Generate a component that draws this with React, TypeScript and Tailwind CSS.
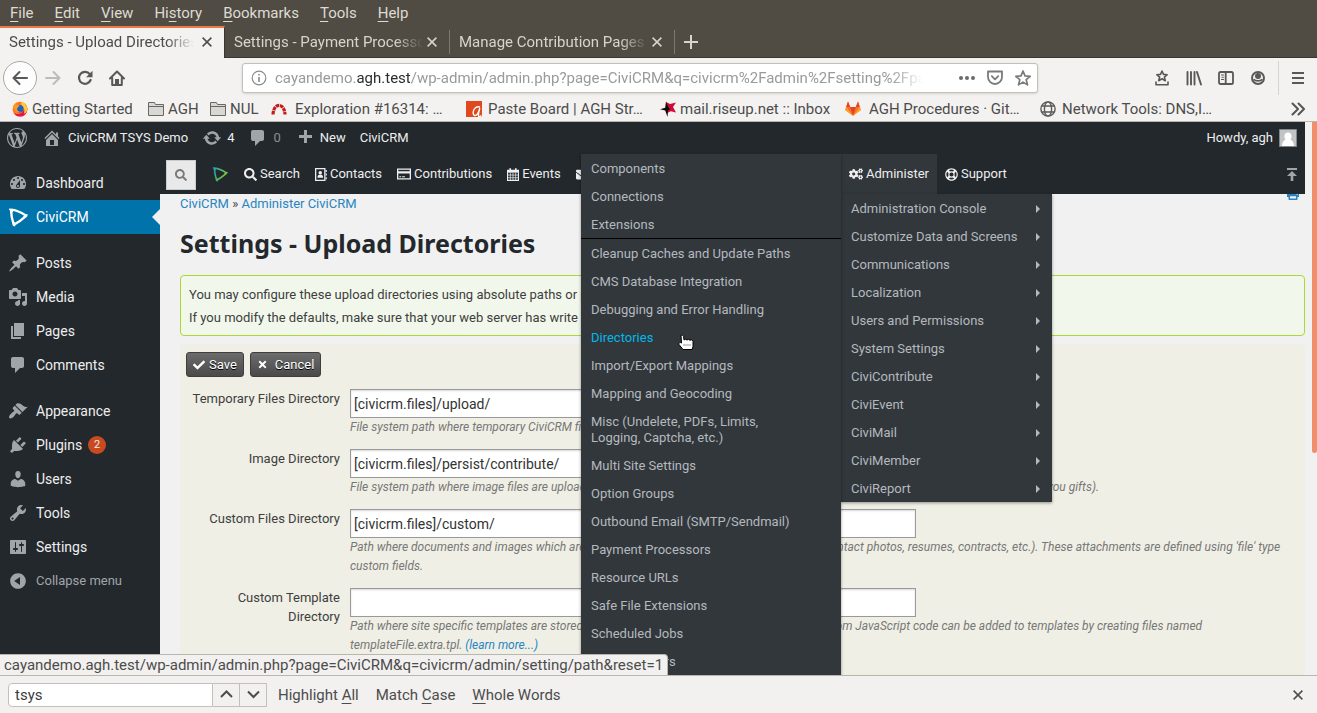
import React from 'react';
import { FaSearch, FaCheck, FaTimes, FaCogs, FaPrint, FaRegLifeRing, FaEnvelope, FaIdBadge, FaChartBar } from 'react-icons/fa';

/* ---------- shared icon helpers ---------- */

function Dash({ d, className = '' }: { d: string; className?: string }) {
  return (
    <svg viewBox="0 0 20 20" className={`size-5 shrink-0 ${className}`} fill="currentColor" aria-hidden="true">
      <path d={d} />
    </svg>
  );
}

const dash = {
  wordpress:
    'M20 10c0-5.51-4.49-10-10-10C4.48 0 0 4.49 0 10c0 5.52 4.48 10 10 10 5.51 0 10-4.48 10-10zM7.78 15.37L4.37 6.22c.55-.02 1.17-.08 1.17-.08.5-.06.44-1.13-.06-1.11 0 0-1.45.11-2.37.11-.18 0-.37 0-.58-.01C4.12 2.69 6.87 1.11 10 1.11c2.33 0 4.45.87 6.05 2.34-.68-.11-1.65.39-1.65 1.58 0 .74.45 1.36.9 2.1.35.61.55 1.36.55 2.46 0 1.49-1.4 5-1.4 5l-3.03-8.37c.54-.02.82-.17.82-.17.5-.05.44-1.25-.06-1.22 0 0-1.44.12-2.38.12-.87 0-2.33-.12-2.33-.12-.5-.03-.56 1.2-.06 1.22l.92.08 1.26 3.41zM17.41 10c.24-.64.74-1.87.43-4.25.7 1.29 1.05 2.71 1.05 4.25 0 3.29-1.73 6.24-4.4 7.78.97-2.59 1.94-5.2 2.92-7.78zM6.1 18.09C3.12 16.65 1.11 13.53 1.11 10c0-1.3.23-2.48.72-3.59C3.25 10.3 4.67 14.2 6.1 18.09zm4.03-6.63l2.58 6.98c-.86.29-1.76.45-2.71.45-.79 0-1.57-.11-2.29-.33.81-2.38 1.62-4.74 2.42-7.1z',
  home: 'M16 8.5l1.53 1.53-1.06 1.06L10 4.6l-6.47 6.49-1.06-1.06L10 2.5l4 4v-2h2v4zm-6-2.46l6 5.99V18H4v-5.97zM12 17v-5H8v5h4z',
  update:
    'M10.2 3.28c3.53 0 6.43 2.61 6.92 6h2.08l-3.5 4-3.5-4h2.32c-.45-1.97-2.21-3.45-4.32-3.45-1.45 0-2.73.71-3.54 1.78L4.95 5.66C6.23 4.2 8.11 3.28 10.2 3.28zm-.4 13.44c-3.52 0-6.43-2.61-6.92-6H.8l3.5-4c1.17 1.33 2.33 2.67 3.5 4H5.48c.45 1.97 2.21 3.45 4.32 3.45 1.45 0 2.73-.71 3.54-1.78l1.71 1.95c-1.28 1.46-3.15 2.38-5.25 2.38z',
  plus: 'M17 7v3h-5v5H9v-5H4V7h5V2h3v5h5z',
  dashboard:
    'M3.76 16h12.48c1.1-1.37 1.76-3.11 1.76-5 0-4.42-3.58-8-8-8s-8 3.58-8 8c0 1.89.66 3.63 1.76 5zM10 4c.55 0 1 .45 1 1s-.45 1-1 1-1-.45-1-1 .45-1 1-1zM6 6c.55 0 1 .45 1 1s-.45 1-1 1-1-.45-1-1 .45-1 1-1zm8 0c.55 0 1 .45 1 1s-.45 1-1 1-1-.45-1-1 .45-1 1-1zm-5.37 5.55L12 7v6c0 1.1-.9 2-2 2s-2-.9-2-2c0-.57.24-1.08.63-1.45zM4 10c.55 0 1 .45 1 1s-.45 1-1 1-1-.45-1-1 .45-1 1-1zm12 0c.55 0 1 .45 1 1s-.45 1-1 1-1-.45-1-1 .45-1 1-1zm-5 3c0-.55-.45-1-1-1s-1 .45-1 1 .45 1 1 1 1-.45 1-1z',
  post: 'M10.44 3.02l1.82-1.82 6.36 6.35-1.83 1.82c-1.05-.68-2.48-.57-3.41.36l-.75.75c-.92.93-1.04 2.35-.35 3.41l-1.83 1.82-2.41-2.41-2.8 2.79c-.42.42-3.38 2.71-3.8 2.29s1.86-3.39 2.28-3.81l2.79-2.79L4.1 9.36l1.83-1.82c1.05.69 2.48.57 3.4-.36l.75-.75c.93-.92 1.05-2.35.36-3.41z',
  media:
    'M13 11V4c0-.55-.45-1-1-1h-1.67L9 1H5L3.67 3H2c-.55 0-1 .45-1 1v7c0 .55.45 1 1 1h10c.55 0 1-.45 1-1zM7 4.5c1.38 0 2.5 1.12 2.5 2.5S8.38 9.5 7 9.5 4.5 8.38 4.5 7 5.62 4.5 7 4.5zM14 6h5v10.5c0 1.38-1.12 2.5-2.5 2.5S14 17.88 14 16.5s1.12-2.5 2.5-2.5c.17 0 .34.02.5.05V9h-3V6zm-4 8.05V13h2v3.5c0 1.38-1.12 2.5-2.5 2.5S7 17.88 7 16.5 8.12 14 9.5 14c.17 0 .34.02.5.05z',
  page: 'M6 15V2h10v13H6zm-1 1h8v2H3V5h2v11z',
  comments: 'M5 2h9c1.1 0 2 .9 2 2v7c0 1.1-.9 2-2 2h-2l-5 5v-5H5c-1.1 0-2-.9-2-2V4c0-1.1.9-2 2-2z',
  appearance:
    'M14.48 11.06L7.41 3.99l1.5-1.5c.5-.56 2.3-.47 3.51.32 1.21.8 1.43 1.28 2.91 2.1 1.18.64 2.45 1.26 4.45.85zm-.71.71L6.7 4.7 4.93 6.47c-.39.39-.39 1.02 0 1.41l1.06 1.06c.39.39.39 1.03 0 1.42-.6.6-1.43 1.11-2.21 1.69-.35.26-.7.53-1.01.84C1.43 14.23.4 16.08 1.4 17.07c.99 1 2.84-.03 4.18-1.36.31-.31.58-.66.85-1.02.57-.78 1.08-1.61 1.69-2.21.39-.39 1.02-.39 1.41 0l1.06 1.06c.39.39 1.02.39 1.41 0z',
  plugins:
    'M13.11 4.36L9.87 7.6 8 5.73l3.24-3.24c.35-.34 1.05-.2 1.56.32.52.51.66 1.21.31 1.55zm-8 1.77l.91-1.12 9.01 9.01-1.19.84c-.71.71-2.63 1.16-3.82 1.16H6.14L4.9 17.26c-.59.59-1.54.59-2.12 0-.59-.58-.59-1.53 0-2.12l1.24-1.24v-3.88c0-1.13.4-3.19 1.09-3.89zm7.26 3.97l3.24-3.24c.34-.35 1.04-.21 1.55.31.52.51.66 1.21.31 1.55l-3.24 3.25z',
  users:
    'M10 9.25c-2.27 0-2.73-3.44-2.73-3.44C7 4.02 7.82 2 9.97 2c2.16 0 2.98 2.02 2.71 3.81 0 0-.41 3.44-2.68 3.44zm0 2.57L12.72 10c2.39 0 4.52 2.33 4.52 4.53v2.49s-3.65 1.13-7.24 1.13c-3.65 0-7.24-1.13-7.24-1.13v-2.49c0-2.25 1.94-4.48 4.47-4.48z',
  tools:
    'M16.68 9.77c-1.34 1.34-3.3 1.67-4.95.99l-5.41 6.52c-.99.99-2.59.99-3.58 0s-.99-2.59 0-3.57l6.52-5.42c-.68-1.65-.35-3.61.99-4.95 1.28-1.28 3.12-1.62 4.72-1.06l-2.89 2.89 2.82 2.82 2.86-2.87c.53 1.58.18 3.39-1.08 4.65zM3.81 16.21c.4.39 1.04.39 1.43 0 .4-.4.4-1.04 0-1.43-.39-.4-1.03-.4-1.43 0-.39.39-.39 1.03 0 1.43z',
  settings:
    'M18 16V4c0-.55-.45-1-1-1H3c-.55 0-1 .45-1 1v12c0 .55.45 1 1 1h14c.55 0 1-.45 1-1zM8 11h1c.55 0 1 .45 1 1s-.45 1-1 1H8v1.5c0 .28-.22.5-.5.5s-.5-.22-.5-.5V13H6c-.55 0-1-.45-1-1s.45-1 1-1h1V5.5c0-.28.22-.5.5-.5s.5.22.5.5V11zm5-2h-1c-.55 0-1-.45-1-1s.45-1 1-1h1V5.5c0-.28.22-.5.5-.5s.5.22.5.5V7h1c.55 0 1 .45 1 1s-.45 1-1 1h-1v5.5c0 .28-.22.5-.5.5s-.5-.22-.5-.5V9z',
  collapse:
    'M10 2.16c4.33 0 7.84 3.51 7.84 7.84s-3.51 7.84-7.84 7.84S2.16 14.33 2.16 10 5.71 2.16 10 2.16zm2 11.72V6.12L6.18 9.97z',
};

function Civi({ className = '', gradient = false }: { className?: string; gradient?: boolean }) {
  return (
    <svg viewBox="0 0 20 20" className={className} fill="none" strokeLinejoin="round" strokeLinecap="round" aria-hidden="true">
      <defs>
        <linearGradient id="civi" x1="0" y1="0" x2="1" y2="0.4">
          <stop offset="0" stopColor="#2a9bc4" />
          <stop offset="0.4" stopColor="#3fb56a" />
          <stop offset="1" stopColor="#7fc242" />
        </linearGradient>
      </defs>
      <path
        d="M3 2.6C8 3 13 5.2 18.2 8.8 14.4 12.2 10.8 15 5.8 17.8 4.2 13 3 8 3 2.6z"
        stroke={gradient ? 'url(#civi)' : 'currentColor'}
        strokeWidth={gradient ? 2 : 2.4}
      />
      <path d="M1.6 2.2L4.4 4.6M19 7.8L16 9.6M6.6 18.8L6.4 15.8" stroke={gradient ? 'url(#civi)' : 'currentColor'} strokeWidth="1.4" />
    </svg>
  );
}

function Cross({ className = '' }: { className?: string }) {
  return (
    <svg viewBox="0 0 10 10" className={`size-[10px] ${className}`} stroke="currentColor" strokeWidth="1.5" aria-hidden="true">
      <path d="M.6.6l8.8 8.8M9.4.6L.6 9.4" />
    </svg>
  );
}

/* ---------- browser chrome ---------- */

const menus: [string, string, string][] = [
  ['', 'F', 'ile'],
  ['', 'E', 'dit'],
  ['', 'V', 'iew'],
  ['Hi', 's', 'tory'],
  ['', 'B', 'ookmarks'],
  ['', 'T', 'ools'],
  ['', 'H', 'elp'],
];

function MenuBar() {
  return (
    <nav className="flex h-[26px] items-center gap-[21px] bg-[#504c44] pl-[10px] text-[#dfdbd2]">
      {menus.map(([a, b, c]) => (
        <button key={a + b + c}>
          {a}
          <span className="underline underline-offset-[3px]">{b}</span>
          {c}
        </button>
      ))}
    </nav>
  );
}

const tabTitle =
  'flex-1 overflow-hidden text-left whitespace-nowrap [mask-image:linear-gradient(to_right,black_85%,transparent)]';

function Tabs() {
  return (
    <div className="flex h-8 border-b border-[#3b3431] bg-[#504c44] text-[#d8d4cb]">
      <div className="-mb-px flex w-[225px] items-center border-t-2 border-r border-t-[#ef7847] border-r-[#3b3431] bg-[#f4f2f0] pr-3 pb-0.5 pl-[9px] text-[#4c4c4c]">
        <button className={tabTitle}>Settings - Upload Directories</button>
        <button aria-label="Close tab" className="pl-2"><Cross /></button>
      </div>
      {['Settings - Payment Processors', 'Manage Contribution Pages'].map((t) => (
        <div key={t} className="flex w-[225px] items-center pl-[9px]">
          <button className={tabTitle}>{t}</button>
          <button aria-label="Close tab" className="pr-3 pl-1"><Cross /></button>
          <span className="h-6 w-px bg-[#7d7971]" />
        </div>
      ))}
      <button aria-label="New tab" className="px-[9px]">
        <svg viewBox="0 0 14 14" className="size-[14px]" stroke="currentColor" strokeWidth="2" aria-hidden="true"><path d="M7 0v14M0 7h14" /></svg>
      </button>
    </div>
  );
}

function NavBar() {
  return (
    <div className="flex h-10 items-center bg-[#f4f2f0] pr-3 pl-[3px] text-[#585858]">
      <button aria-label="Back" className="flex size-[34px] items-center justify-center rounded-full border border-[#aaa8a4] bg-[#fdfdfd]">
        <svg viewBox="0 0 16 16" className="size-4" fill="none" stroke="currentColor" strokeWidth="2" strokeLinecap="round" strokeLinejoin="round"><path d="M15 8H1.5M7.5 2l-6 6 6 6" /></svg>
      </button>
      <button aria-label="Forward" className="ml-2 text-[#bdbbb8]">
        <svg viewBox="0 0 16 16" className="size-4" fill="none" stroke="currentColor" strokeWidth="2" strokeLinecap="round" strokeLinejoin="round"><path d="M1 8h13.5M8.5 2l6 6-6 6" /></svg>
      </button>
      <button aria-label="Reload" className="ml-4">
        <svg viewBox="0 0 16 16" className="size-4" fill="none" stroke="currentColor" strokeWidth="2.2" strokeLinecap="round"><path d="M12.8 4.2A6 6 0 1 0 13.6 10" /><path d="M15.5 .8v6.4H9z" fill="currentColor" stroke="none" /></svg>
      </button>
      <button aria-label="Home" className="ml-4">
        <svg viewBox="0 0 16 16" className="size-4" fill="none" stroke="currentColor" strokeWidth="2" strokeLinecap="round" strokeLinejoin="round"><path d="M1 8.5L8 1.5l7 7M3.2 8v7h9.6V8" /><path d="M6 9h4v5H6z" fill="currentColor" stroke="none" /></svg>
      </button>
      <label className="ml-[117px] flex h-[30px] max-w-[796px] flex-1 items-center rounded-[3px] border border-[#c3c0bb] bg-white pr-1.5 pl-2 text-[#9a9a9a] shadow-sm">
        <svg viewBox="0 0 16 16" className="size-4 shrink-0" fill="none" stroke="#8a8a8a" strokeWidth="1.2"><circle cx="8" cy="8" r="6.8" /><path d="M8 7v5M8 4v1.6" strokeWidth="1.6" /></svg>
        <span className="ml-2 flex-1 overflow-hidden whitespace-nowrap [mask-image:linear-gradient(to_right,black_95%,transparent)]">
          cayandemo.<span className="text-[#2c2c2c]">agh.test</span>/wp-admin/admin.php?page=CiviCRM&amp;q=civicrm%2Fadmin%2Fsetting%2Fpath
        </span>
        <span className="ml-9 flex gap-0.5">
          {[0, 1, 2].map((i) => <i key={i} className="size-1 rounded-full bg-[#6b6b6b]" />)}
        </span>
        <svg viewBox="0 0 16 16" className="ml-3 size-4" fill="none" stroke="#7a7a7a" strokeWidth="1.8" strokeLinecap="round" strokeLinejoin="round"><path d="M1 1.5h14v5.5a7 7 0 0 1-14 0z" /><path d="M4.8 6.2L8 9.3l3.2-3.1" /></svg>
        <svg viewBox="0 0 16 16" className="ml-3 size-4" fill="none" stroke="#7a7a7a" strokeWidth="1.7" strokeLinejoin="round"><path d="M8 1l2 4.9 5.2.4-4 3.4 1.3 5.2L8 12.1l-4.5 2.8 1.3-5.2-4-3.4L6 5.9z" /></svg>
      </label>
      <div className="ml-auto flex items-center gap-4">
        <button aria-label="Bookmarks menu"><svg viewBox="0 0 16 16" className="size-4" fill="none" stroke="currentColor" strokeWidth="1.6" strokeLinejoin="round"><path d="M8 1l1.500 3.400 3.700.3-2.800 2.400.9 3.600L8 8.800l-3.300 1.900.9-3.600-2.800-2.400 3.700-.3z" /><path d="M2 12v2.8h12V12" strokeLinecap="round" /></svg></button>
        <button aria-label="Library"><svg viewBox="0 0 16 16" className="size-4" fill="none" stroke="currentColor" strokeWidth="1.9" strokeLinecap="round"><path d="M1.5 2v12.5M5 2v12.5M8.5 2v12.5M11 2l4 12.5" /></svg></button>
        <button aria-label="Sidebars"><svg viewBox="0 0 16 16" className="size-4" fill="none" stroke="currentColor" strokeWidth="1.8"><rect x="1" y="2" width="14" height="12" rx="1.6" /><path d="M7.7 2v12" /><path d="M3 5h3M3.5 7.3h2.3M3 9.5h3" strokeWidth="1" /></svg></button>
        <button aria-label="Account"><svg viewBox="0 0 16 16" className="size-4" fill="none" stroke="currentColor" strokeWidth="2"><circle cx="8" cy="8" r="6" /><circle cx="8" cy="6" r="3" fill="currentColor" stroke="none" /><path d="M3.600 9.300c1.800 2.200 7 2.200 8.800 0" strokeWidth="1.800" /></svg></button>
        <span className="-mx-1 h-[34px] w-px bg-[#d6d3cf]" />
        <button aria-label="Open menu"><svg viewBox="0 0 14 14" className="size-[14px]" stroke="currentColor" strokeWidth="2"><path d="M1 2h12M1 7h12M1 12h12" /></svg></button>
      </div>
    </div>
  );
}

function Folder() {
  return (
    <svg viewBox="0 0 16 14" className="h-[14px] w-4 shrink-0" fill="#d9d7d4" stroke="#6a6865" aria-hidden="true">
      <path d="M.5 13.5V.5h6l1 2h8v11zM.5 4.5h15" />
    </svg>
  );
}

const firefox = (
  <svg viewBox="0 0 16 16" className="size-4 shrink-0" aria-hidden="true">
    <circle cx="8" cy="8.2" r="7.4" fill="#ff7a1a" />
    <path d="M8 15.6a7.4 7.4 0 0 0 7.4-7.4C15.4 5.5 14 3.3 12.5 2c.6 2-.2 8-3 10S3 13 1.5 11.5A7.4 7.4 0 0 0 8 15.6z" fill="#e8144b" />
    <path d="M9.5.6c3.5 1.2 6 4.2 5.9 7.6-.4 2.8-1.8 4-3.4 4.6C13 9 12 6 9.8 4.5 9 3.5 9 2 9.5.6z" fill="#ffcb2e" />
    <circle cx="7.8" cy="7.8" r="3.7" fill="#1b63c9" />
    <path d="M1 6C1.5 4 2.5 2.6 3.5 2c0 1 .5 1.7 1.5 2 1.3 0 2 .4 2.5 1-1.2.8-2 1.5-2.5 3.2.3 1.9 2 2.8 4 2.3C6.5 12.3 3.5 11 2.5 8z" fill="#ff9a1f" />
  </svg>
);

const redmine = (
  <svg viewBox="0 0 16 12" className="h-3 w-4 shrink-0" fill="none" stroke="#c61a1a" strokeWidth="3.2" aria-hidden="true">
    <path d="M2 11.5C2.4 6 4.5 2.4 8 2.4s5.6 3.6 6 9.1" strokeDasharray="3.6 .7" />
  </svg>
);

const paste = (
  <svg viewBox="0 0 16 16" className="size-4 shrink-0" aria-hidden="true">
    <path d="M0 0h16v16H0z" fill="#e0481e" />
    <path d="M14 6c-3.500-1-6.300 1.500-6.800 5-.3 3 1.500 4.400 3.300 3 1.600-1.200 2.500-3.500 3.300-7-.8 3-2 7-1 8.500 .6.5 1.600.2 2.700-1" fill="none" stroke="#fff" strokeWidth="1.4" />
  </svg>
);

const riseup = (
  <svg viewBox="0 0 16 16" className="size-4 shrink-0" aria-hidden="true">
    <path d="M6 1l4 2 6-1.500L13 6l3 5.500-5-1.200L7 12z" fill="#cf0a3a" />
    <path d="M6 .5L8.200 6l1.800 2.200-2 1.200L7.500 16 5.200 9.500 0 8.300l5.200-1.500z" fill="#0b0b0b" />
  </svg>
);

const gitlab = (
  <svg viewBox="0 0 16 15" className="h-[15px] w-4 shrink-0" aria-hidden="true">
    <path d="M8 14.8L.2 9l1-3L3 .5 5.2 6h5.6L13 .5 14.8 6l1 3z" fill="#fc6d26" />
    <path d="M8 14.8L5.2 6h5.6z" fill="#e24329" />
    <path d="M8 14.8L.2 9l1-3zM8 14.8L15.8 9l-1-3z" fill="#fca326" />
    <path d="M3 .5L5.2 6h-4zM13 .5L14.8 6h-4z" fill="#e24329" />
  </svg>
);

const globe = (
  <svg viewBox="0 0 16 16" className="size-4 shrink-0" fill="none" stroke="#5a5a5a" strokeWidth="1.4" aria-hidden="true">
    <circle cx="8" cy="8" r="7.1" />
    <ellipse cx="8" cy="8" rx="3.6" ry="7.1" />
    <path d="M1.7 5h12.6M1.7 11h12.6" />
  </svg>
);

function Bookmarks() {
  const items: [React.ReactNode, string, string][] = [
    [firefox, 'Getting Started', 'w-[136px] gap-1'],
    [<Folder />, 'AGH', 'w-[62px] gap-1'],
    [<Folder />, 'NUL', 'w-[61px] gap-1'],
    [redmine, 'Exploration #16314: …', 'w-[195px] gap-2'],
    [paste, 'Paste Board | AGH Str…', 'w-[194px] gap-1.5'],
    [riseup, 'mail.riseup.net :: Inbox', 'w-[185px] gap-1'],
    [gitlab, 'AGH Procedures · Git…', 'w-[195px] gap-2'],
    [globe, 'Network Tools: DNS,I…', 'w-[185px] gap-1.5'],
  ];
  return (
    <div className="flex h-[24px] items-center border-b border-[#b9b6b2] bg-[#f4f2f0] pb-0.5 pl-3 text-[#4c4c4c]">
      {items.map(([icon, label, cls]) => (
        <a key={label} href="#" className={`flex shrink-0 items-center whitespace-nowrap ${cls}`}>
          {icon}
          {label}
        </a>
      ))}
      <button aria-label="More bookmarks" className="mr-3 ml-auto">
        <svg viewBox="0 0 14 14" className="size-[14px]" fill="none" stroke="#555" strokeWidth="2" strokeLinecap="round" strokeLinejoin="round"><path d="M1.5 1.5L7 7l-5.5 5.5M7.5 1.5L13 7l-5.500 5.500" /></svg>
      </button>
    </div>
  );
}

/* ---------- WordPress admin ---------- */

function AdminBar() {
  return (
    <div className="flex h-8 items-center bg-[#23282d] pr-2 pl-[7px] text-[13px] text-[#eee]">
      <a href="#" aria-label="About WordPress" className="text-[#a0a5aa]"><Dash d={dash.wordpress} /></a>
      <a href="#" className="ml-[15px] flex items-center gap-1.5"><Dash d={dash.home} className="text-[#a0a5aa]" />CiviCRM TSYS Demo</a>
      <a href="#" className="ml-3.5 flex items-center gap-[5px]"><Dash d={dash.update} className="text-[#a0a5aa]" />4</a>
      <a href="#" className="ml-3.5 flex items-center gap-[5px] text-[#8a8e92]"><Dash d={dash.comments} className="text-[#a0a5aa]" />0</a>
      <a href="#" className="ml-3.5 flex items-center gap-[5px]"><Dash d={dash.plus} className="text-[#a0a5aa]" />New</a>
      <a href="#" className="ml-3.5">CiviCRM</a>
      <a href="#" className="ml-auto flex items-center gap-1.5">
        Howdy, agh
        <svg viewBox="0 0 18 18" className="size-[18px]" aria-hidden="true">
          <path d="M.5.5h17v17H.5z" fill="#c3c3c3" stroke="#82878c" />
          <path d="M9 3.5c2.2 0 3.6 1.5 3.6 3.7 0 1.5-.6 2.6-1.4 3.3 2.3.8 3.6 3 3.8 6.5H3c.2-3.5 1.5-5.7 3.8-6.5C6 9.8 5.4 8.7 5.4 7.2 5.4 5 6.8 3.5 9 3.5z" fill="#fff" />
        </svg>
      </a>
    </div>
  );
}

const sideItems: { label: string; icon: string; gap?: boolean; badge?: string; current?: boolean }[] = [
  { label: 'Dashboard', icon: dash.dashboard },
  { label: 'CiviCRM', icon: '', current: true },
  { label: 'Posts', icon: dash.post, gap: true },
  { label: 'Media', icon: dash.media },
  { label: 'Pages', icon: dash.page },
  { label: 'Comments', icon: dash.comments },
  { label: 'Appearance', icon: dash.appearance, gap: true },
  { label: 'Plugins', icon: dash.plugins, badge: '2' },
  { label: 'Users', icon: dash.users },
  { label: 'Tools', icon: dash.tools },
  { label: 'Settings', icon: dash.settings },
];

function Sidebar() {
  return (
    <nav className="w-40 shrink-0 bg-[#23282d] pt-3 text-[14px] text-[#eee]">
      {sideItems.map((it) => (
        <a
          key={it.label}
          href="#"
          className={`relative flex h-[34px] items-center gap-2 pl-2 ${it.gap ? 'mt-3' : ''} ${it.current ? 'bg-[#0073aa] text-white' : ''}`}
        >
          {it.current ? <Civi className="size-5" /> : <Dash d={it.icon} className="text-[#a0a5aa]" />}
          {it.label}
          {it.badge && <span className="-ml-0.5 flex size-[18px] items-center justify-center rounded-full bg-[#ca4a1f] text-[11px]">{it.badge}</span>}
          {it.current && <span className="absolute top-1/2 right-0 -translate-y-1/2 border-8 border-transparent border-r-[#f1f1f1]" />}
        </a>
      ))}
      <button className="flex h-[34px] items-center gap-2 pl-2 text-[13px] text-[#a0a5aa]"><Dash d={dash.collapse} />Collapse menu</button>
    </nav>
  );
}

/* ---------- CiviCRM menu ---------- */

const contactsIcon = (
  <svg viewBox="0 0 13 14" className="h-[13px] w-3" aria-hidden="true">
    <path d="M.7.7h10v12.6H.7z" fill="none" stroke="currentColor" strokeWidth="1.4" />
    <circle cx="5.7" cy="5" r="1.9" fill="currentColor" />
    <path d="M2.6 10.5c0-2.5 1.2-3.6 3.1-3.6s3.1 1.1 3.1 3.6z" fill="currentColor" />
    <path d="M11.5 2h1.3v2.2h-1.3zM11.5 6h1.3v2.2h-1.3zM11.5 10h1.3v2.2h-1.3z" fill="currentColor" />
  </svg>
);

const cardIcon = (
  <svg viewBox="0 0 15 12" className="h-3 w-[14px]" aria-hidden="true">
    <path d="M.7.7h13.6v10.6H.7z" fill="none" stroke="currentColor" strokeWidth="1.4" />
    <path d="M.7 3h13.6v2.5H.7zM2.5 8.5h2v1h-2zM5.5 8.5h3v1h-3z" fill="currentColor" />
  </svg>
);

const calendarIcon = (
  <svg viewBox="0 0 13 14" className="h-[13px] w-3" fill="none" stroke="currentColor" aria-hidden="true">
    <path d="M.6 2.5h11.8v10.9H.6z" strokeWidth="1.2" />
    <path d="M.6 4h11.8" strokeWidth="2" />
    <path d="M.6 7.6h11.8M.6 10.5h11.8M3.6 5v8.4M6.5 5v8.4M9.4 5v8.4" strokeWidth=".8" />
    <path d="M3.5.3v3M9.5.3v3" strokeWidth="1.8" />
  </svg>
);

const civiItems: [React.ReactNode, string][] = [
  [<FaSearch className="size-[13px]" />, 'Search'],
  [contactsIcon, 'Contacts'],
  [cardIcon, 'Contributions'],
  [calendarIcon, 'Events'],
  [<FaEnvelope className="size-[13px]" />, 'Mailings'],
  [<FaIdBadge className="size-[13px]" />, 'Members'],
  [<FaChartBar className="size-[13px]" />, 'Reports'],
];

const adminItems = [
  'Administration Console', 'Customize Data and Screens', 'Communications', 'Localization', 'Users and Permissions',
  'System Settings', 'CiviContribute', 'CiviEvent', 'CiviMail', 'CiviMember', 'CiviReport',
];

const systemItems = [
  'Components', 'Connections', 'Extensions', 'Cleanup Caches and Update Paths', 'CMS Database Integration',
  'Debugging and Error Handling', 'Directories', 'Import/Export Mappings', 'Mapping and Geocoding',
  'Misc (Undelete, PDFs, Limits, Logging, Captcha, etc.)', 'Multi Site Settings', 'Option Groups',
  'Outbound Email (SMTP/Sendmail)', 'Payment Processors', 'Resource URLs', 'Safe File Extensions', 'Scheduled Jobs', 'SMS Providers',
];

function CiviMenu() {
  return (
    <div className="relative z-10 flex h-10 items-center bg-[#23282d] pl-1.5 text-[13px] text-[#eee]">
      <button aria-label="Quick search" className="mt-0.5 flex size-[30px] shrink-0 items-center justify-center border border-[#ccc] bg-[#e9e9e9] text-[#7a7a7a]">
        <FaSearch className="size-3" />
      </button>
      <div className="flex w-[645px] shrink-0 items-center overflow-hidden">
        <a href="#" aria-label="CiviCRM home" className="px-4"><Civi gradient className="size-4" /></a>
        {civiItems.map(([icon, label]) => (
          <a key={label} href="#" className="flex shrink-0 items-center gap-[3px] pr-[15px]">
            {icon}
            {label}
          </a>
        ))}
      </div>
      <div className="relative flex h-10 items-center bg-[#32373c]">
        <a href="#" className="flex items-center gap-[3px] px-2"><FaCogs className="size-[14px]" />Administer</a>
        <ul className="absolute top-full left-0 w-[211px] bg-[#32373c] text-[#b4b9be] shadow-[0_1px_3px_rgba(0,0,0,0.4)]">
          {adminItems.map((t) => (
            <li key={t}>
              <a href="#" className="flex items-center justify-between pt-[7px] pr-3 pb-[5px] pl-2.5 leading-4">
                {t}
                <svg viewBox="0 0 4 8" className="h-2 w-1" fill="currentColor" aria-hidden="true"><path d="M0 0l4 4-4 4z" /></svg>
              </a>
            </li>
          ))}
        </ul>
        <ul className="absolute top-0 right-full w-[260px] bg-[#32373c] pb-7 text-[#b4b9be] shadow-[0_1px_3px_rgba(0,0,0,0.4)]">
          {systemItems.map((t) => (
            <li key={t} className={t === 'Extensions' ? 'border-b border-black' : ''}>
              <a href="#" className={`block pt-[7px] pr-[70px] pb-[5px] pl-2.5 leading-4 ${t.length < 40 ? 'whitespace-nowrap' : ''} ${t === 'Directories' ? 'text-[#00b9eb]' : ''}`}>{t}</a>
            </li>
          ))}
        </ul>
        <svg viewBox="0 0 16 17" className="absolute top-[180px] -left-[163px] h-[17px] w-4" aria-hidden="true">
          <path d="M3 1.5c1.6-1 2.6 0 2.6 1l.4 3.5 1.5-.8 1.5.8 1.5-.6 1.5.8 1.7-.4 1.3 1.4v5.3l-1 3H5L1 10.5C.4 9 2 8 3.5 9z" fill="#fff" stroke="#000" />
          <path d="M6 10v2M8 10v2M10 10v2M12 10v2" stroke="#999" />
        </svg>
      </div>
      <a href="#" className="ml-2 flex items-center gap-[3px]"><FaRegLifeRing className="size-[13px]" />Support</a>
      <button aria-label="Adjust menu position" className="mr-2 ml-auto text-[#a0a5aa]">
        <svg viewBox="0 0 10 13" className="h-[13px] w-[10px]" aria-hidden="true"><path d="M0 0h10v2H0zM5 3l5 5H6.3v5H3.7V8H0z" fill="currentColor" /></svg>
      </button>
    </div>
  );
}

/* ---------- settings form ---------- */

const fields: { id: string; label: string; value: string; help: React.ReactNode }[] = [
  { id: 'uploadDir', label: 'Temporary Files Directory', value: '[civicrm.files]/upload/', help: 'File system path where temporary CiviCRM files - such as import data files - are uploaded.' },
  { id: 'imageUploadDir', label: 'Image Directory', value: '[civicrm.files]/persist/contribute/', help: 'File system path where image files are uploaded. Currently this path is used in images associated with premiums (CiviContribute thank-you gifts).' },
  { id: 'customFileUploadDir', label: 'Custom Files Directory', value: '[civicrm.files]/custom/', help: "Path where documents and images which are attachments to contact records are kept (e.g. contact photos, resumes, contracts, etc.). These attachments are defined using 'file' type custom fields." },
  {
    id: 'customTemplateDir', label: 'Custom Template Directory', value: '',
    help: <>Path where site specific templates are stored if any. This folder is searched first if it's set. Custom JavaScript code can be added to templates by creating files named templateFile.extra.tpl. <a href="#" className="text-[#2786c2]">(learn more...)</a></>,
  },
];

const buttonStyle =
  'flex h-[25px] items-center rounded-[3px] border border-[#3e3e3e] bg-linear-to-b from-[#6c6c6c] to-[#4a4a4a] text-white [text-shadow:0_1px_0_black]';

function Content() {
  return (
    <main className="bg-[#f1f1f1] pl-5 text-[13px] text-[#3e3e3e]">
      <div className="flex h-[19px] items-center justify-between">
        <p><a href="#" className="text-[#2786c2]">CiviCRM</a> » <a href="#" className="text-[#2786c2]">Administer CiviCRM</a></p>
        <a href="#" aria-label="Print" className="-mt-1.5 mr-1.5 self-start text-[#2786c2]"><FaPrint className="size-3" /></a>
      </div>
      <h1 className="mt-3 font-['Noto_Sans'] text-[25px] leading-9 font-bold text-[#23282d]">Settings - Upload Directories</h1>
      <div className="mt-3.5 rounded border border-[#acd836] bg-[#f1f8eb] px-2 pt-[7px] pb-1.5 leading-[23px]">
        <p>You may configure these upload directories using absolute paths or path variables.</p>
        <p>If you modify the defaults, make sure that your web server has write access to the directories.</p>
      </div>
      <form className="mt-2 rounded bg-[#efefe5] px-1.5 pt-2 pb-10" onSubmit={(e) => e.preventDefault()}>
        <div className="flex gap-1.5">
          <button className={`${buttonStyle} gap-1 px-1.5`}><FaCheck className="size-3" />Save</button>
          <button className={`${buttonStyle} gap-[7px] px-1.5`}><FaTimes className="size-[11px]" />Cancel</button>
        </div>
        <div className="mt-3 flex flex-col gap-3">
          {fields.map((f) => (
            <div key={f.id} className="flex gap-2.5">
              <label htmlFor={f.id} className="w-[154px] shrink-0 text-right leading-[19px]">{f.label}</label>
              <div className="min-w-0 flex-1">
                <input
                  id={f.id}
                  defaultValue={f.value}
                  className="block h-[29px] w-[566px] border border-[#999] bg-white px-[3px] text-[14px] text-[#333] shadow-[inset_0_1px_2px_rgba(0,0,0,0.15)]"
                />
                <p className="text-[12px] leading-[19px] text-[#777] italic">{f.help}</p>
              </div>
            </div>
          ))}
        </div>
      </form>
    </main>
  );
}

function FindBar() {
  return (
    <div className="flex h-[38px] items-center border-t border-[#b9b6b2] bg-[#f2f1ef] pr-3.5 pl-2 text-[#4c4c4c]">
      <input aria-label="Find in page" defaultValue="tsys" className="h-6 w-[205px] rounded-l-sm border border-[#c3c0bb] bg-white px-1.5 text-[#3c3c3c]" />
      {['M1 7l5.5-5.5L12 7', 'M1 1.5L6.5 7 12 1.5'].map((d, i) => (
        <button key={d} aria-label={i ? 'Next' : 'Previous'} className="flex h-6 w-[27px] items-center justify-center border border-l-0 border-[#c3c0bb]">
          <svg viewBox="0 0 13 9" className="h-[9px] w-[13px]" fill="none" stroke="currentColor" strokeWidth="2"><path d={d} /></svg>
        </button>
      ))}
      <button className="ml-[11px]">Highlight <u className="underline-offset-[3px]">A</u>ll</button>
      <button className="ml-[17px]">Match <u className="underline-offset-[3px]">C</u>ase</button>
      <button className="ml-[17px]"><u className="underline-offset-[3px]">W</u>hole Words</button>
      <button aria-label="Close find bar" className="ml-auto"><Cross /></button>
    </div>
  );
}

export default function App() {
  return (
    <div className="flex h-screen flex-col overflow-hidden font-['Roboto',sans-serif] text-[15px] leading-5">
      <MenuBar />
      <Tabs />
      <NavBar />
      <Bookmarks />
      <div className="relative flex min-h-0 flex-1 overflow-hidden bg-[#f1f1f1]">
        <div className="flex min-w-0 flex-1 flex-col">
          <AdminBar />
          <div className="flex min-h-0 flex-1">
            <Sidebar />
            <div className="min-w-0 flex-1">
              <CiviMenu />
              <Content />
            </div>
          </div>
        </div>
        <div className="w-3 pl-[7px]"><div className="h-[331px] rounded-b-sm bg-[#f0906a]" /></div>
        <div className="absolute bottom-0 left-0 z-20 rounded-tr border-t border-r border-[#b9b6b2] bg-[#f2f1ef] px-1 text-[#4c4c4c]">
          cayandemo.agh.test/wp-admin/admin.php?page=CiviCRM&amp;q=civicrm/admin/setting/path&amp;reset=1
        </div>
      </div>
      <FindBar />
    </div>
  );
}
